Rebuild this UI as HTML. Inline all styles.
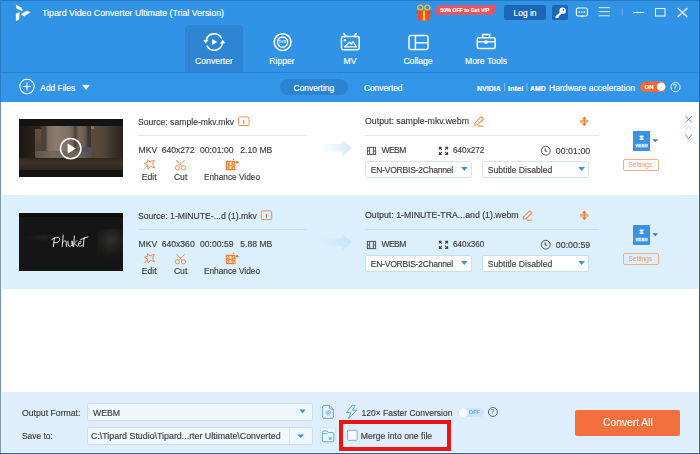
<!DOCTYPE html>
<html><head><meta charset="utf-8">
<style>
html,body{margin:0;padding:0;}
body{width:700px;height:454px;position:relative;overflow:hidden;background:#fff;font-family:"Liberation Sans",sans-serif;transform:translateZ(0);}
.a{position:absolute;}
.t{position:absolute;white-space:nowrap;line-height:1;font-family:"Liberation Sans",sans-serif;-webkit-font-smoothing:antialiased;}
.w{color:#fff;-webkit-text-stroke:0.15px #fff;}
.d{color:#3c3c3c;-webkit-text-stroke:0.15px #3c3c3c;}
.b{font-weight:bold;}
svg.ov{position:absolute;left:0;top:0;overflow:visible;}
</style></head><body>

<!-- ============ backgrounds ============ -->
<div class="a" style="left:0;top:0;width:700px;height:72px;background:#3193e6;"></div>
<div class="a" style="left:0;top:0;width:700px;height:1px;background:#2476c6;"></div>
<div class="a" style="left:185px;top:25px;width:58px;height:47px;background:#2e85d3;border-radius:4px 4px 0 0;"></div>
<div class="a" style="left:0;top:72px;width:700px;height:1px;background:#2a82d2;"></div>
<div class="a" style="left:0;top:73px;width:700px;height:29px;background:#3395e8;"></div>
<div class="a" style="left:280px;top:78.5px;width:67.5px;height:16px;border-radius:8px;background:#2b83d1;"></div>

<!-- row 2 bg -->
<div class="a" style="left:0;top:195px;width:700px;height:94px;background:#dbeffd;"></div>

<!-- thumbnails -->
<div class="a" style="left:19px;top:119px;width:104px;height:58px;background:#141414;overflow:hidden;">
  <div class="a" style="left:0;top:6.5px;width:104px;height:44px;background:#2a231c;"></div>
  <div class="a" style="left:22px;top:6.5px;width:50px;height:25.5px;background:linear-gradient(90deg,#4d4036 0,#4d4036 9%,#7d6e61 14%,#8a7b6e 30%,#7f7063 55%,#6f6155 64%,#4a3d33 68%,#76685c 76%,#6a5b4f 88%,#40352c 94%,#40352c 100%);"></div>
  <div class="a" style="left:72px;top:6.5px;width:32px;height:32px;background:linear-gradient(90deg,#5b4b3f,#544538 40%,#3b3129 70%,#2a231d);"></div>
  <div class="a" style="left:16px;top:9.5px;width:6px;height:25px;background:linear-gradient(180deg,#5f5142,#4d4034);"></div>
  <div class="a" style="left:72px;top:7px;width:3px;height:2.5px;background:#8a7c55;border-radius:1px;"></div>
  <div class="a" style="left:16px;top:31.5px;width:60px;height:7px;background:linear-gradient(90deg,#5e5449,#75695c 30%,#6e6357 70%,#4e463d);border-radius:2px;"></div>
  <div class="a" style="left:60px;top:28px;width:13px;height:5px;background:#4f525e;border-radius:2px;"></div>
  <div class="a" style="left:0;top:38.5px;width:104px;height:12px;background:linear-gradient(180deg,#2f271f,#3e3329 40%,#2e261f 100%);"></div>
  <div class="a" style="left:0;top:6.5px;width:16px;height:32px;background:linear-gradient(90deg,#1c1713,#29221b);"></div>
</div>
<div class="a" style="left:19px;top:213px;width:104px;height:58px;background:#151515;overflow:hidden;">
  <div class="a" style="left:0;top:0;width:104px;height:4px;background:#0e0e0e;"></div>
  <div class="a" style="left:8px;top:21px;width:34px;height:7px;background:radial-gradient(ellipse at 50% 50%,#242424,#151515 75%);"></div>
  <div class="a" style="left:78px;top:16px;width:26px;height:28px;background:radial-gradient(circle at 55% 40%,#332e27,#171717 70%);"></div>
</div>

<!-- separators -->
<div class="a" style="left:137.5px;top:135px;width:169px;height:1.3px;background:#d9ebf9;"></div>
<div class="a" style="left:365px;top:135px;width:234px;height:1.3px;background:#d9ebf9;"></div>
<div class="a" style="left:137.5px;top:229px;width:169px;height:1.3px;background:#c6e1f7;"></div>
<div class="a" style="left:365px;top:229px;width:234px;height:1.3px;background:#c6e1f7;"></div>

<!-- faint arrows -->
<svg class="ov" width="700" height="454">
  <defs>
    <linearGradient id="ag" x1="0" x2="1" y1="0" y2="0">
      <stop offset="0" stop-color="#d6ebfb" stop-opacity="0"/>
      <stop offset="1" stop-color="#d3e9fb" stop-opacity="1"/>
    </linearGradient>
    <linearGradient id="ag2" x1="0" x2="1" y1="0" y2="0">
      <stop offset="0" stop-color="#cde8fb" stop-opacity="0"/>
      <stop offset="1" stop-color="#c6e4fb" stop-opacity="1"/>
    </linearGradient>
  </defs>
  <path d="M320,144 H342.5 V140.6 L352,148 L342.5,156.2 V151.8 H320 Z" fill="url(#ag)"/>
  <path d="M320,238 H342.5 V234.6 L352,242 L342.5,250.2 V245.8 H320 Z" fill="url(#ag2)"/>
</svg>

<!-- dropdown boxes -->
<div class="a" style="left:365px;top:161px;width:106.5px;height:16.5px;border:1px solid #d3e5f5;border-radius:2px;background:#fff;box-sizing:border-box;"></div>
<div class="a" style="left:482px;top:161px;width:107px;height:16.5px;border:1px solid #d3e5f5;border-radius:2px;background:#fff;box-sizing:border-box;"></div>
<div class="a" style="left:365px;top:255px;width:106.5px;height:16.5px;border:1px solid #c6def4;border-radius:2px;background:#fff;box-sizing:border-box;"></div>
<div class="a" style="left:482px;top:255px;width:107px;height:16.5px;border:1px solid #c6def4;border-radius:2px;background:#fff;box-sizing:border-box;"></div>

<!-- settings buttons -->
<div class="a" style="left:623px;top:159px;width:35.5px;height:11.5px;border:1px solid #f4ae85;border-radius:2px;box-sizing:border-box;"></div>
<div class="a" style="left:623px;top:253px;width:35.5px;height:11.5px;border:1px solid #f4ae85;border-radius:2px;box-sizing:border-box;"></div>

<!-- format icons -->
<div class="a" style="left:633px;top:131px;width:17px;height:20px;background:#3b92e0;border-radius:1px;"></div>
<div class="a" style="left:633px;top:225px;width:17px;height:20px;background:#3b92e0;border-radius:1px;"></div>

<!-- bottom bar -->
<div class="a" style="left:0;top:392px;width:700px;height:62px;background:#dfeefc;"></div>
<div class="a" style="left:87px;top:403px;width:226px;height:18px;border:1px solid #c9def2;border-radius:2px;background:#eef6fe;box-sizing:border-box;"></div>
<div class="a" style="left:87px;top:427px;width:226px;height:18px;border:1px solid #c9def2;border-radius:2px;background:#eef6fe;box-sizing:border-box;"></div>
<div class="a" style="left:289px;top:428px;width:1px;height:16px;background:#d6e6f5;"></div>
<div class="a" style="left:320px;top:403.5px;width:16px;height:16.5px;border:1px solid #d4e6f6;border-radius:2px;background:#eaf4fd;box-sizing:border-box;"></div>
<div class="a" style="left:320px;top:427px;width:16px;height:17px;border:1px solid #d4e6f6;border-radius:2px;background:#eaf4fd;box-sizing:border-box;"></div>
<div class="a" style="left:458px;top:407.7px;width:25.5px;height:9.8px;border-radius:5px;background:#cde5fb;"></div>
<div class="a" style="left:575px;top:410px;width:105px;height:25.5px;background:#f36f3e;border-radius:2px;"></div>

<!-- ============ icons overlay ============ -->
<svg class="ov" width="700" height="454">
  <!-- logo -->
  <g fill="#fff">
    <polygon points="15.8,4.5 21.5,7.5 22.8,11.3 16.5,8.8"/>
    <polygon points="20.8,14.2 26.8,10.8 30.3,12.3 24.2,16.4"/>
    <polygon points="15.9,13.8 19.5,12.0 19.2,19.4 15.9,21.0"/>
  </g>
  <!-- gift -->
  <g>
    <ellipse cx="420.2" cy="7.6" rx="2.6" ry="2.4" fill="none" stroke="#f7c62a" stroke-width="1.3" transform="rotate(-30 420.2 7.6)"/>
    <ellipse cx="427.4" cy="7.6" rx="2.6" ry="2.4" fill="none" stroke="#f7c62a" stroke-width="1.3" transform="rotate(30 427.4 7.6)"/>
    <rect x="416.4" y="10.6" width="14.5" height="2.8" fill="#e8451d"/>
    <rect x="418" y="13.4" width="12.2" height="7" fill="#f0501f"/>
    <rect x="422.8" y="10.6" width="2.4" height="9.8" fill="#f8c92b"/>
  </g>
  <!-- banner -->
  <polygon points="436.9,5.3 496.3,5.3 493.7,14.8 435.4,14.8" fill="#f0525a"/>
  <!-- login / key -->
  <rect x="504" y="5" width="42" height="15" rx="2" fill="#1b67b6"/>
  <rect x="552" y="5" width="16" height="15" rx="1.5" fill="#1b67b6"/>
  <g fill="#fff" stroke="none">
    <circle cx="562.6" cy="10.8" r="3.2"/>
    <path d="M560.6,11.4 L555,17 L556.6,18.6 L562.2,13 Z"/>
    <path d="M557,15.4 L558.8,17.2 L557.8,18.2 L556,16.4 Z"/>
  </g>
  <circle cx="563.4" cy="9.9" r="0.9" fill="#1b67b6"/>
  <!-- chat -->
  <g fill="none" stroke="#fff" stroke-width="1.1">
    <rect x="576.4" y="8" width="11" height="8" rx="1.6"/>
  </g>
  <path d="M580.2,15.8 L582,17.6 L583.8,15.8 Z" fill="#fff"/>
  <g fill="#fff"><circle cx="579.4" cy="12" r=".85"/><circle cx="581.9" cy="12" r=".85"/><circle cx="584.4" cy="12" r=".85"/></g>
  <!-- menu -->
  <g stroke="#c2ddf7" stroke-width="1.2"><line x1="598.6" y1="7.6" x2="610" y2="7.6"/><line x1="598.6" y1="11.6" x2="610" y2="11.6"/><line x1="598.6" y1="15.7" x2="610" y2="15.7"/></g>
  <line x1="622.2" y1="8.6" x2="622.2" y2="15.7" stroke="#6aaef0" stroke-width="1"/>
  <!-- window controls -->
  <g stroke="#fff" stroke-width="1.1" fill="none">
    <line x1="633.2" y1="12.5" x2="644.2" y2="12.5" stroke-width="1"/>
    <rect x="655.5" y="8.5" width="9.5" height="7.5" stroke-width="1"/>
    <line x1="677.6" y1="8" x2="687.3" y2="17"/><line x1="687.3" y1="8" x2="677.6" y2="17"/>
  </g>

  <!-- converter icon -->
  <g stroke="#fff" stroke-width="1.6" fill="none" stroke-linecap="round">
    <path d="M221.4,37.9 A8.2,8.2 0 0 0 206.2,40.6"/>
    <path d="M207.2,46.1 A8.2,8.2 0 0 0 222.4,43.4"/>
  </g>
  <g fill="#fff">
    <polygon points="203.3,40.3 208.6,39.6 205.6,43.4"/>
    <polygon points="219.9,43.6 225.2,43.2 222.9,39.8"/>
    <polygon points="212,39 212,45.1 217.3,42"/>
  </g>
  <!-- ripper icon -->
  <g stroke="#fff" fill="none">
    <circle cx="282.6" cy="42.1" r="8.4" stroke-width="1.6"/>
    <circle cx="282.6" cy="42.1" r="5.1" stroke-width="1.3"/>
  </g>
  <text x="282.6" y="43.4" font-family="Liberation Sans" font-weight="bold" font-size="3.6" fill="#fff" text-anchor="middle" opacity=".85">DVD</text>
  <!-- MV icon -->
  <g stroke="#fff" fill="none" stroke-width="1.5" stroke-linejoin="round">
    <rect x="341.5" y="36.4" width="17.7" height="13.3" rx="1.6"/>
    <line x1="343.4" y1="33.3" x2="346.4" y2="36.4"/>
    <line x1="356.6" y1="33.3" x2="353.6" y2="36.4"/>
    <polygon points="344.6,46.8 349.7,42.2 351.3,44.2 353,41.6 356.4,46.8" stroke-width="1.3"/>
  </g>
  <circle cx="345" cy="40.3" r="1.2" fill="#fff"/>
  <!-- collage -->
  <g stroke="#fff" fill="none" stroke-width="1.5">
    <rect x="409" y="35.5" width="19" height="13.9" rx="2"/>
    <line x1="415.4" y1="35.5" x2="415.4" y2="49.4"/>
    <line x1="415.4" y1="42.8" x2="428" y2="42.8"/>
  </g>
  <!-- more tools -->
  <g stroke="#fff" fill="none" stroke-width="1.5">
    <rect x="477.3" y="37.8" width="17.8" height="10.7" rx="1.5"/>
    <path d="M482.6,37.8 V34.6 H489.6 V37.8"/>
    <line x1="477.3" y1="41.8" x2="495.1" y2="41.8" stroke-width="1.3"/>
  </g>
  <circle cx="485.9" cy="42.1" r="1.9" fill="#fff"/>

  <!-- add files -->
  <g stroke="#fff" stroke-width="1.1" fill="none">
    <circle cx="27" cy="86.5" r="7.2"/>
    <line x1="23" y1="86.5" x2="31" y2="86.5"/><line x1="27" y1="82.5" x2="27" y2="90.5"/>
  </g>
  <polygon points="82.6,85.3 89.4,85.3 86,89.4" fill="#fff" stroke="#fff" stroke-width=".6" stroke-linejoin="round"/>
  <!-- hw accel separators -->
  <g stroke="#8fc3f2" stroke-width=".8">
    <line x1="504.6" y1="83" x2="504.6" y2="91"/>
    <line x1="527" y1="83" x2="527" y2="91"/>
  </g>
  <!-- ON toggle -->
  <rect x="640" y="81.4" width="26" height="10.7" rx="5.35" fill="#f26c36"/>
  <circle cx="661.2" cy="86.75" r="4.3" fill="#fff"/>
  <circle cx="675.5" cy="87.05" r="4.6" fill="none" stroke="#fff" stroke-width=".9"/>

  <!-- ===== row icons (row1 and row2) ===== -->
  <g id="rowicons">
    <!-- edit star -->
    <g fill="none" stroke="#f3904f" stroke-width="1" stroke-linejoin="round">
      <path d="M147.6,159.6 L150,162 L154.2,160.2 L152.6,164 L154.6,167.8 L150.6,166.4 L148,169 L147.6,165.2 L144.4,163.3 L147.8,162.2 Z"/>
      <line x1="147.6" y1="165.2" x2="144.2" y2="169.4"/>
    </g>
    <!-- cut -->
    <g fill="none" stroke="#f3904f" stroke-width="1">
      <circle cx="177.3" cy="167.8" r="2.1"/>
      <circle cx="183.5" cy="167.8" r="2.1"/>
      <line x1="178.4" y1="166" x2="184.6" y2="160.3"/>
      <line x1="182.4" y1="166" x2="176.2" y2="160.3"/>
    </g>
    <!-- enhance -->
    <rect x="225.8" y="160.8" width="9.6" height="9.4" fill="#f37a2e"/>
    <g fill="#fde8d8">
      <rect x="227" y="162" width="1.3" height="1.7"/><rect x="227" y="164.6" width="1.3" height="1.7"/><rect x="227" y="167.2" width="1.3" height="1.8"/>
      <rect x="229.4" y="162" width="2.2" height="3.3"/><rect x="229.4" y="166.2" width="2.2" height="2.8"/>
      <rect x="232.8" y="162" width="1.4" height="1.7"/><rect x="232.8" y="164.6" width="1.4" height="1.7"/><rect x="232.8" y="167.2" width="1.4" height="1.8"/>
    </g>
    <circle cx="233.6" cy="159.2" r=".8" fill="#f37a2e"/>
    <circle cx="237.3" cy="162.2" r="1.2" fill="#f06a20"/>
    <!-- move -->
    <rect x="580" y="120" width="8.4" height="2.7" fill="#f5a675"/>
    <g fill="#f0782c">
      <polygon points="581.9,119.4 586.7,119.4 584.3,116.4"/>
      <polygon points="581.9,123.3 586.7,123.3 584.3,126.2"/>
      <rect x="583.85" y="117.5" width=".9" height="7.5"/>
    </g>
    <!-- film -->
    <g fill="none" stroke="#555" stroke-width="1">
      <rect x="367.4" y="147.4" width="8.2" height="7.2"/>
      <line x1="369.6" y1="147.4" x2="369.6" y2="154.6"/>
      <line x1="373.4" y1="147.4" x2="373.4" y2="154.6"/>
      <line x1="367.4" y1="151" x2="369.6" y2="151"/>
      <line x1="373.4" y1="151" x2="375.6" y2="151"/>
    </g>
    <!-- resize -->
    <g fill="none" stroke="#444" stroke-width="1.1">
      <path d="M439.4,149.6 V147.2 H441.8 M439.4,147.2 L441.9,149.7"/>
      <path d="M447.6,149.6 V147.2 H445.2 M447.6,147.2 L445.1,149.7"/>
      <path d="M439.4,152 V154.4 H441.8 M439.4,154.4 L441.9,151.9"/>
      <path d="M447.6,152 V154.4 H445.2 M447.6,154.4 L445.1,151.9"/>
    </g>
    <!-- clock -->
    <circle cx="545.8" cy="150.7" r="4.4" fill="none" stroke="#555" stroke-width="1"/>
    <path d="M545.2,148.4 V151.2 H547.2" fill="none" stroke="#444" stroke-width="1"/>
    <!-- dropdown arrows -->
    <polygon points="461,167 467.6,167 464.3,171" fill="#3b8fdc"/>
    <polygon points="578.2,167 585,167 581.6,171" fill="#3b8fdc"/>
    <!-- format icon inner -->
    <g fill="#fff">
      <rect x="639.6" y="135.6" width="4" height="1.4"/>
      <rect x="640.4" y="137.2" width="2.4" height="1"/>
      <rect x="639.6" y="138.4" width="4" height="1.5"/>
    </g>
    <rect x="635.6" y="143.4" width="12" height="4.6" rx=".6" fill="#8cc2f0" opacity=".55"/>
    <text x="641.6" y="147.2" font-family="Liberation Sans" font-weight="bold" font-size="3.9" fill="#fff" text-anchor="middle">WEBM</text>
    <polygon points="652.4,139.3 658.2,139.3 655.3,142.2" fill="#2f80cd"/>
  </g>
  <use href="#rowicons" y="94"/>
  <g id="info1">
    <rect x="238.6" y="116.9" width="10.4" height="8.6" rx="1" fill="none" stroke="#f29050" stroke-width="1"/>
    <line x1="243.8" y1="120" x2="243.8" y2="124" stroke="#b86a3a" stroke-width=".9"/>
  </g>
  <use href="#info1" x="22.7" y="94"/>
  <g id="pencil1" fill="none" stroke="#f29050" stroke-width="1.1" stroke-linejoin="round">
    <path d="M474.6,125.2 L475.2,122.6 L481.2,116.8 L483.4,119 L477.4,124.8 Z"/>
    <line x1="478" y1="126.2" x2="483.6" y2="126.2"/>
  </g>
  <use href="#pencil1" x="48.5" y="94"/>

  <!-- row1 close/up/down -->
  <g fill="none" stroke="#4a88cc" stroke-width=".95">
    <line x1="685.4" y1="116.1" x2="691.9" y2="122.3"/>
    <line x1="691.9" y1="116.1" x2="685.4" y2="122.3"/>
    <path d="M685.4,130.5 L688.6,126.1 L691.9,130.5" stroke="#c6d6e6"/>
    <path d="M685.4,134.4 L688.6,138.8 L691.9,134.4"/>
  </g>

  <!-- Phuket script -->
  <g fill="none" stroke="#e6e6e6" stroke-width="1" stroke-linecap="round" stroke-linejoin="round">
    <path d="M54.4,237.8 L53.4,246.6"/>
    <path d="M51.8,239.6 C55,237 61.5,236.2 59.4,240.6 C58,243 55.6,243 54,242.6"/>
    <path d="M63.2,235.2 L62.2,246.6"/>
    <path d="M62.4,243 C63.2,241.2 65.6,239.8 66.2,241.8 L66.4,246.4"/>
    <path d="M67.8,241.2 L68.4,245.4 C69.4,246.8 71.6,246.2 72,244.8 L72,240.8 L72.8,246.2"/>
    <path d="M74.4,236 L73.6,246.6"/>
    <path d="M77,240.6 L74.2,243.4 L77.6,246.4"/>
    <path d="M78.4,244 C80.2,243.6 82.2,242.2 80.8,241.2 C79.2,240.8 78,243.4 78.6,245.4 C79.6,246.8 81.6,246.2 82.6,245.2"/>
    <path d="M84.2,237.4 L83.2,246.6"/>
    <path d="M80.6,239.6 L88,236.8"/>
  </g>
  <!-- play button -->
  <circle cx="70.7" cy="148.6" r="10.2" fill="none" stroke="#fff" stroke-width="1.5"/>
  <polygon points="67.6,143.4 67.6,153.8 76,148.6" fill="#fff"/>

  <!-- bottom icons -->
  <polygon points="299.4,409.6 305.8,409.6 302.6,413.2" fill="#3b8fdc"/>
  <polygon points="297.2,434.4 304,434.4 300.6,438" fill="#3b8fdc"/>
  <g fill="none" stroke="#62a5e4" stroke-width="1" stroke-linejoin="round">
    <path d="M324,405.6 H329.8 L333.3,409.1 V417 Q333.3,418.3 332,418.3 H324 Q322.7,418.3 322.7,417 V406.9 Q322.7,405.6 324,405.6 Z"/>
    <path d="M329.8,405.6 V408 Q329.8,409.1 330.9,409.1 H333.3"/>
    <circle cx="328.2" cy="412.7" r="2.4" stroke-dasharray="1.1 .5"/>
    <circle cx="328.2" cy="412.7" r="1"/>
    <path d="M323.6,431 H327.2 L328.4,432.6 H332.6 Q333.8,432.6 333.8,433.8 V440.6 Q333.8,441.8 332.6,441.8 H323.6 Q322.4,441.8 322.4,440.6 V432.2 Q322.4,431 323.6,431 Z"/>
    <line x1="322.4" y1="433.6" x2="327.8" y2="433.6" stroke-width=".8"/>
    <rect x="328.8" y="437.4" width="2.8" height="2.2" fill="#62a5e4" stroke="none"/>
    <path d="M352.4,405.3 L346.3,412.6 H350.8 L348.4,418.6 L356.8,410.2 H352.4 L355.2,405.3 Z" stroke-width=".95"/>
  </g>
  <rect x="347.5" y="430.2" width="9.7" height="10.2" rx="1" fill="#f4f9fe" stroke="#7db2e6" stroke-width="1"/>
  <circle cx="463.2" cy="412.6" r="4.3" fill="#fff"/>
  <circle cx="492.9" cy="412" r="4.5" fill="none" stroke="#555" stroke-width=".9"/>
</svg>

<!-- ============ text ============ -->
<div class="t w" style="left:42px;top:8.7px;font-size:8.8px;">Tipard Video Converter Ultimate (Trial Version)</div>
<div class="t w b" style="left:440.3px;top:8.2px;font-size:5.3px;letter-spacing:-0.02px;">50% OFF to Get VIP</div>
<div class="t w" style="left:513.6px;top:9px;font-size:8.4px;">Log in</div>

<div class="t w" style="left:194px;top:56.6px;font-size:8.65px;width:40px;text-align:center;">Converter</div>
<div class="t w" style="left:262px;top:56.6px;font-size:8.65px;width:40px;text-align:center;">Ripper</div>
<div class="t w" style="left:330px;top:56.6px;font-size:8.65px;width:40px;text-align:center;">MV</div>
<div class="t w" style="left:398px;top:56.6px;font-size:8.65px;width:40px;text-align:center;">Collage</div>
<div class="t w" style="left:456px;top:56.6px;font-size:8.65px;width:60px;text-align:center;">More Tools</div>

<div class="t w" style="left:40.3px;top:83.6px;font-size:8.4px;">Add Files</div>
<div class="t w" style="left:293.6px;top:83.8px;font-size:8.4px;">Converting</div>
<div class="t w" style="left:363.9px;top:83.8px;font-size:8.4px;">Converted</div>
<div class="t w b" style="left:477px;top:85.2px;font-size:7px;">NVIDIA</div>
<div class="t w b" style="left:508px;top:85.2px;font-size:7.4px;">Intel</div>
<div class="t w b" style="left:530px;top:85.8px;font-size:6.9px;">AMD</div>
<div class="t w" style="left:549px;top:83.8px;font-size:8.6px;">Hardware acceleration</div>
<div class="t w b" style="left:644.6px;top:83.6px;font-size:6px;">ON</div>
<div class="t w" style="left:672.9px;top:83.6px;font-size:6.5px;">?</div>

<!-- row 1 text -->
<div class="t d" style="left:138px;top:117.8px;font-size:8.65px;">Source: sample-mkv.mkv</div>
<div class="t d" style="left:138.6px;top:146.1px;font-size:8.6px;">MKV</div>
<div class="t d" style="left:161.7px;top:146.1px;font-size:8.6px;">640x272</div>
<div class="t d" style="left:200px;top:146.1px;font-size:8.6px;">00:01:00</div>
<div class="t d" style="left:240.3px;top:146.1px;font-size:8.6px;">2.10 MB</div>
<div class="t d" style="left:141.8px;top:173.1px;font-size:8.6px;">Edit</div>
<div class="t d" style="left:173.9px;top:173.1px;font-size:8.6px;">Cut</div>
<div class="t d" style="left:203.9px;top:173.1px;font-size:8.3px;">Enhance Video</div>
<div class="t d" style="left:365px;top:117.4px;font-size:8.8px;">Output: sample-mkv.webm</div>
<div class="t d" style="left:381.4px;top:146.4px;font-size:8.6px;letter-spacing:-0.6px;">WEBM</div>
<div class="t d" style="left:453px;top:146.7px;font-size:8.2px;">640x272</div>
<div class="t d" style="left:555.8px;top:146.7px;font-size:8.86px;">00:01:00</div>
<div class="t d" style="left:370.7px;top:165.8px;font-size:8.6px;letter-spacing:-0.26px;">EN-VORBIS-2Channel</div>
<div class="t d" style="left:487.8px;top:165.8px;font-size:8.6px;">Subtitle Disabled</div>
<div class="t" style="left:628.3px;top:161.3px;font-size:7px;letter-spacing:-0.2px;color:#f29a66;">Settings</div>

<!-- row 2 text -->
<div class="t d" style="left:138px;top:211.8px;font-size:8.65px;">Source: 1-MINUTE-...d (1).mkv</div>
<div class="t d" style="left:138.6px;top:240.1px;font-size:8.6px;">MKV</div>
<div class="t d" style="left:161.7px;top:240.1px;font-size:8.6px;">640x360</div>
<div class="t d" style="left:200px;top:240.1px;font-size:8.6px;">00:00:59</div>
<div class="t d" style="left:240.3px;top:240.1px;font-size:8.6px;">5.88 MB</div>
<div class="t d" style="left:141.8px;top:267.1px;font-size:8.6px;">Edit</div>
<div class="t d" style="left:173.9px;top:267.1px;font-size:8.6px;">Cut</div>
<div class="t d" style="left:203.9px;top:267.1px;font-size:8.3px;">Enhance Video</div>
<div class="t d" style="left:365px;top:211.4px;font-size:8.76px;">Output: 1-MINUTE-TRA...and (1).webm</div>
<div class="t d" style="left:381.4px;top:240.4px;font-size:8.6px;letter-spacing:-0.6px;">WEBM</div>
<div class="t d" style="left:453px;top:240.7px;font-size:8.2px;">640x360</div>
<div class="t d" style="left:555.8px;top:240.7px;font-size:8.86px;">00:00:59</div>
<div class="t d" style="left:370.7px;top:259.8px;font-size:8.6px;letter-spacing:-0.26px;">EN-VORBIS-2Channel</div>
<div class="t d" style="left:487.8px;top:259.8px;font-size:8.6px;">Subtitle Disabled</div>
<div class="t" style="left:628.3px;top:255.3px;font-size:7px;letter-spacing:-0.2px;color:#f29a66;">Settings</div>


<!-- bottom text -->
<div class="t d" style="left:22px;top:408.6px;font-size:8.7px;">Output Format:</div>
<div class="t d" style="left:22px;top:432.2px;font-size:8.4px;">Save to:</div>
<div class="t d" style="left:93px;top:408.6px;font-size:8.7px;">WEBM</div>
<div class="t d" style="left:91px;top:432.2px;font-size:8.85px;">C:\Tipard Studio\Tipard...rter Ultimate\Converted</div>
<div class="t d" style="left:361.5px;top:408.7px;font-size:8.5px;">120× Faster Conversion</div>
<div class="t b" style="left:468.8px;top:409.5px;font-size:5.6px;color:#62a6e8;">OFF</div>
<div class="t" style="left:490.6px;top:408.6px;font-size:6.5px;color:#555;">?</div>
<div class="t d" style="left:360.7px;top:431.9px;font-size:8.7px;">Merge into one file</div>
<div class="t w" style="left:603px;top:418px;font-size:10.3px;">Convert All</div>

<!-- red highlight box -->
<div class="a" style="left:339px;top:420px;width:112.3px;height:31px;border:4.7px solid #ec1515;box-sizing:border-box;"></div>

<!-- window borders -->
<div class="a" style="left:1px;top:102px;width:1px;height:351px;background:#eef8fd;"></div>
<div class="a" style="left:698px;top:102px;width:1px;height:351px;background:#eef8fd;"></div>
<div class="a" style="left:0;top:452px;width:700px;height:1px;background:#f2f9fe;"></div>
<div class="a" style="left:0;top:102px;width:1px;height:352px;background:#7893b3;"></div>
<div class="a" style="left:0;top:0;width:1px;height:102px;background:#2a7dcc;"></div>
<div class="a" style="left:699px;top:0;width:1px;height:454px;background:#2d5f9c;"></div>
<div class="a" style="left:699px;top:0;width:1px;height:102px;background:#1f68ba;"></div>
<div class="a" style="left:0;top:453px;width:700px;height:1px;background:#2463b0;"></div>

</body></html>
